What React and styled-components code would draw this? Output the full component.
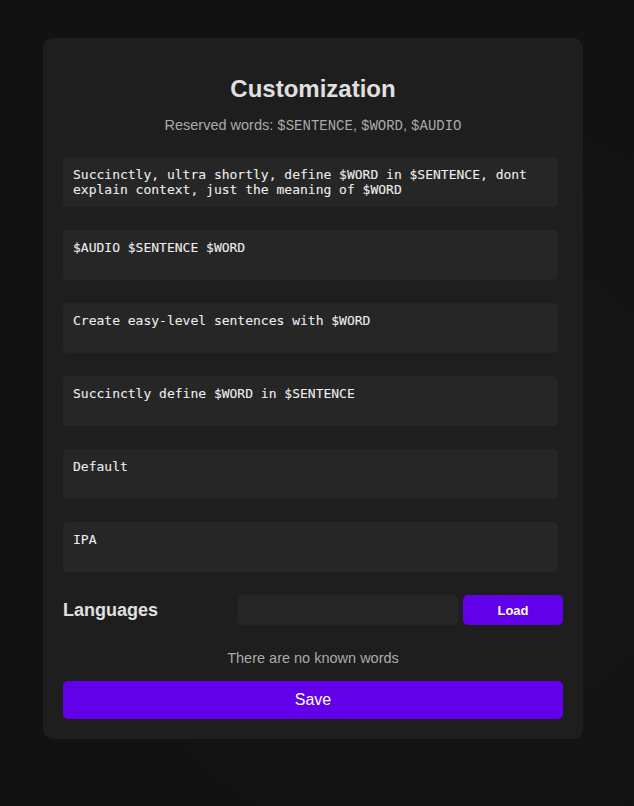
import React from "react";
import styled, { createGlobalStyle } from "styled-components";

const Global = createGlobalStyle`
  html, body { margin: 0; padding: 0; background: #121212; }
  body { font-family: "Liberation Sans", Arial, sans-serif; color: #e0e0e0; }
`;

const Page = styled.div`
  min-height: 806px;
  box-sizing: border-box;
  display: flex;
  justify-content: center;
  align-items: flex-start;
  padding: 38px 8px 0 0;
  background: radial-gradient(circle at 70% 60%, #181818 0%, #121212 60%);
`;

const Card = styled.div`
  width: 540px;
  box-sizing: border-box;
  padding: 20px;
  background: #1e1e1e;
  border-radius: 10px;
  display: flex;
  flex-direction: column;
`;

const Title = styled.h2`
  margin: 17px 0 14px;
  font-size: 24px;
  font-weight: 700;
  line-height: 28px;
  text-align: center;
  color: #e0e0e0;
`;

const Subtitle = styled.p`
  margin: 0 0 23px;
  font-size: 14.5px;
  line-height: 16px;
  text-align: center;
  color: #aaaaaa;
`;

const Code = styled.code`
  font-family: "Liberation Mono", monospace;
  font-size: 14px;
`;

const Prompt = styled.textarea`
  width: 495px;
  height: 50px;
  box-sizing: border-box;
  margin: 0 0 23px;
  padding: 10px;
  border: none;
  border-radius: 5px;
  background: #262626;
  color: #ececec;
  font-family: "DejaVu Sans Mono", monospace;
  font-size: 13px;
  font-weight: 400;
  line-height: 15px;
  resize: none;
  outline: none;
  display: block;
  -webkit-text-stroke: 0.1px #ececec;
`;

const LangRow = styled.div`
  display: flex;
  align-items: center;
  justify-content: space-between;
  height: 30px;
`;

const LangLabel = styled.h3`
  margin: 0;
  font-size: 18px;
  font-weight: 700;
  color: #e0e0e0;
`;

const LangControls = styled.div`
  display: flex;
  gap: 5px;
`;

const LangInput = styled.input`
  width: 220px;
  height: 30px;
  box-sizing: border-box;
  border: none;
  border-radius: 5px;
  background: #262626;
  color: #e0e0e0;
  padding: 0 10px;
  outline: none;
`;

const Button = styled.button`
  border: none;
  border-radius: 5px;
  background: #6200ea;
  color: #ffffff;
  font-family: "Liberation Sans", Arial, sans-serif;
  cursor: pointer;
  width: ${(p) => (p.$wide ? "100%" : "100px")};
  height: ${(p) => (p.$wide ? "38px" : "30px")};
  font-size: ${(p) => (p.$wide ? "16px" : "13px")};
  font-weight: ${(p) => (p.$wide ? 400 : 700)};
`;

const Empty = styled.p`
  margin: 25px 0 15px;
  font-size: 14.5px;
  line-height: 16px;
  text-align: center;
  color: #aaaaaa;
`;

const prompts = [
  "Succinctly, ultra shortly, define $WORD in $SENTENCE, dont explain context, just the meaning of $WORD",
  "$AUDIO $SENTENCE $WORD",
  "Create easy-level sentences with $WORD",
  "Succinctly define $WORD in $SENTENCE",
  "Default",
  "IPA",
];

export default function App() {
  return (
    <>
      <Global />
      <Page>
        <Card>
          <Title>Customization</Title>
          <Subtitle>
            Reserved words: <Code>$SENTENCE</Code>, <Code>$WORD</Code>, <Code>$AUDIO</Code>
          </Subtitle>
          {prompts.map((p, i) => (
            <Prompt key={i} defaultValue={p} />
          ))}
          <LangRow>
            <LangLabel>Languages</LangLabel>
            <LangControls>
              <LangInput type="text" />
              <Button>Load</Button>
            </LangControls>
          </LangRow>
          <Empty>There are no known words</Empty>
          <Button $wide>Save</Button>
        </Card>
      </Page>
    </>
  );
}
